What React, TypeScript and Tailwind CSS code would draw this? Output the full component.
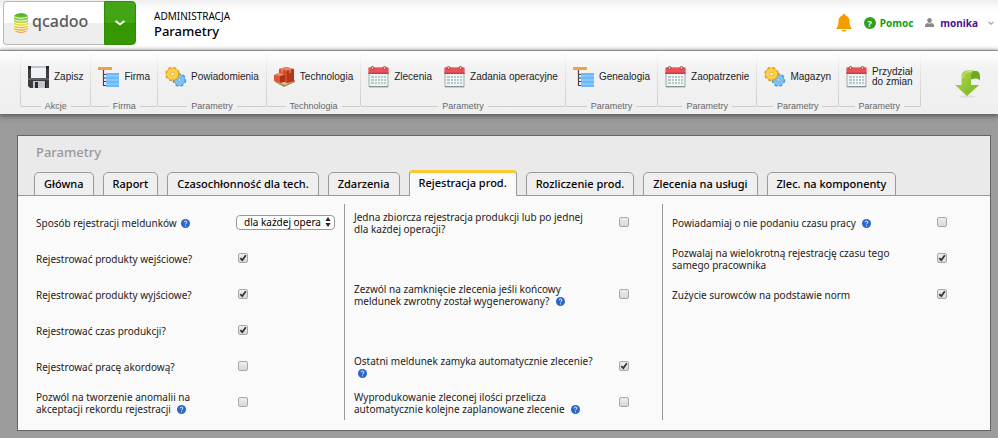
import { useId, type ReactNode } from "react";

function FloppyIcon() {
  return (
    <svg width="22" height="22" viewBox="0 0 22 22" className="shrink-0" aria-hidden="true">
      <path d="M0 0h21v22H2l-2-2z" fill="#3b3d41" />
      <path d="M0 0h21v3H0z" fill="#222428" />
      <path d="M3 0h15v12H3z" fill="#eef2f5" />
      <path d="M3 0h15v2H3z" fill="#bcc5cb" />
      <path d="M5 15h12v7H5z" fill="#c3c7ca" />
      <path d="M7 16h3v6H7z" fill="#2a2c30" />
      <path d="M17 15h1v7h-1z" fill="#16181b" />
      <path d="M0 12h21v2H0z" fill="#5b5e63" />
    </svg>
  );
}

function TreeIcon() {
  return (
    <svg width="22" height="22" viewBox="0 0 22 22" className="shrink-0" aria-hidden="true">
      <path d="M0 1h14v3H0z" fill="#f2a040" />
      <path d="M5.500 4v15.500H9M5.500 8.500H9M5.500 12H9M5.500 15.500H9" fill="none" stroke="#444" strokeWidth="1.200" />
      <path d="M8 7h13v14H8z" fill="#6cb8fc" />
      <path d="M8 10h13M8 14h13M8 18h13" stroke="#a4d4ff" />
    </svg>
  );
}

function Gear({ x, y, r, fill, stroke }: { x: number; y: number; r: number; fill: string; stroke: string }) {
  return (
    <g transform={`translate(${x} ${y})`}>
      <circle r={r + 0.6} fill="none" stroke={stroke} strokeWidth="2.400" strokeDasharray="2.800 2" />
      <circle r={r - 1.6} fill="none" stroke={stroke} strokeWidth="4.800" />
      <circle r={r - 1.6} fill="none" stroke={fill} strokeWidth="3.600" />
    </g>
  );
}

function GearsIcon() {
  return (
    <svg width="22" height="22" viewBox="0 0 22 22" className="shrink-0" aria-hidden="true">
      <Gear x={14.5} y={14} r={5} fill="#7cc4f5" stroke="#4c9bd6" />
      <Gear x={7.5} y={8} r={5.500} fill="#ffd044" stroke="#e0a024" />
    </svg>
  );
}

function BoxesIcon() {
  return (
    <svg width="22" height="22" viewBox="0 0 22 22" className="shrink-0" aria-hidden="true">
      <path d="M1 16l9 5 11-5v-2L10 18 1 14z" fill="#a98a55" />
      <path d="M3 16l8 3 9-4-9-2z" fill="#d8c293" />
      <path d="M5 3l7-2 8 2v12l-7 2-8-3z" fill="#d5492b" />
      <path d="M13 4.500l7-1.500v12l-7 2z" fill="#b43719" />
      <path d="M5 3l7-2 8 2-7 1.500z" fill="#ee8466" />
      <path d="M0 9l5-2 6 1.500v7L6 17l-6-2z" fill="#df5635" />
      <path d="M6 10l5-1.500v7L6 17z" fill="#ac3419" />
      <path d="M0 9l5-2 6 1.500L6 10z" fill="#f0896c" />
      <path d="M8 3v4M16 4v3" stroke="#f6ad93" />
    </svg>
  );
}

function CalendarIcon() {
  return (
    <svg width="22" height="22" viewBox="0 0 22 22" className="shrink-0" aria-hidden="true">
      <path d="M1 2h19v19H1z" fill="#eef4f3" stroke="#a3adab" />
      <path d="M.500 1.500h20V8H.500z" fill="#ee5057" />
      <path d="M.500 6.500h20V8H.500z" fill="#d03a42" />
      <path d="M3 10h15v8H3z" fill="#b5c9c8" />
      <path d="M3 12.500h15M3 15.500h15M6.500 10v8M9.500 10v8M12.500 10v8M15.500 10v8" stroke="#f3f8f7" />
      <path d="M1 20.500h19" stroke="#8b9593" />
      <circle cx="4.500" cy="2" r="1.500" fill="#efc4c4" stroke="#8c2c2c" strokeWidth=".8" />
      <circle cx="16.500" cy="2" r="1.500" fill="#efc4c4" stroke="#8c2c2c" strokeWidth=".8" />
    </svg>
  );
}

function LogoMark() {
  return (
    <svg width="16" height="22" viewBox="0 0 16 22" aria-hidden="true">
      <defs>
        <linearGradient id="mark" x1="0" y1="0" x2="0" y2="1">
          <stop offset="0" stopColor="#3fae22" />
          <stop offset=".35" stopColor="#8fd03a" />
          <stop offset=".6" stopColor="#e8df3c" />
          <stop offset="1" stopColor="#f58a1f" />
        </linearGradient>
      </defs>
      <path d="M1 5C1 0 15 0 15 5v12c0 5-14 5-14 0z" fill="url(#mark)" />
      <path
        d="M.500 4.600Q8 8 15.500 4.600M.500 7.400Q8 10.800 15.500 7.400M.500 10.200Q8 13.400 15.500 10.200M.500 13Q8 16 15.500 13M.500 15.600Q8 18.600 15.500 15.600M1 18Q8 21 15 18"
        fill="none"
        stroke="#fff"
        strokeWidth=".9"
      />
    </svg>
  );
}

type Tool = { label: ReactNode; icon: ReactNode };

const groups: { title: string; tools: Tool[] }[] = [
  { title: "Akcje", tools: [{ label: "Zapisz", icon: <FloppyIcon /> }] },
  { title: "Firma", tools: [{ label: "Firma", icon: <TreeIcon /> }] },
  { title: "Parametry", tools: [{ label: "Powiadomienia", icon: <GearsIcon /> }] },
  { title: "Technologia", tools: [{ label: "Technologia", icon: <BoxesIcon /> }] },
  {
    title: "Parametry",
    tools: [
      { label: "Zlecenia", icon: <CalendarIcon /> },
      { label: "Zadania operacyjne", icon: <CalendarIcon /> },
    ],
  },
  { title: "Parametry", tools: [{ label: "Genealogia", icon: <TreeIcon /> }] },
  { title: "Parametry", tools: [{ label: "Zaopatrzenie", icon: <CalendarIcon /> }] },
  { title: "Parametry", tools: [{ label: "Magazyn", icon: <GearsIcon /> }] },
  {
    title: "Parametry",
    tools: [{ label: <>Przydział<br />do zmian</>, icon: <CalendarIcon /> }],
  },
];

const tabs = [
  "Główna",
  "Raport",
  "Czasochłonność dla tech.",
  "Zdarzenia",
  "Rejestracja prod.",
  "Rozliczenie prod.",
  "Zlecenia na usługi",
  "Zlec. na komponenty",
];

function HelpDot() {
  return (
    <button
      type="button"
      aria-label="Pomoc"
      className="ml-1 inline-block size-[9px] rounded-full bg-[#2a66c8] align-[-1px]"
    >
      <svg viewBox="0 0 9 9" className="block size-full" aria-hidden="true">
        <path d="M3.200 3.300c0-1.800 2.700-1.700 2.700-.1 0 1-1.300 1-1.300 2.100M4.600 6.400v1" fill="none" stroke="#fff" />
      </svg>
    </button>
  );
}

function ToolGroup({ title, tools }: { title: string; tools: Tool[] }) {
  return (
    <div className="flex shrink-0">
      <div className="mb-2 w-px bg-linear-to-b from-transparent via-[#dedede] to-[#ccc]" />
      <div className="flex flex-col">
        <div className="flex h-[46px] px-px">
          {tools.map((tool, i) => (
            <button key={i} type="button" className="flex items-center gap-1 px-1.5 text-left text-[10px] leading-[10px] text-[#222]">
              {tool.icon}
              <span>{tool.label}</span>
            </button>
          ))}
        </div>
        <div className="flex h-3 items-center gap-1 text-[9px] leading-3 text-[#666]">
          <div className="h-px flex-1 bg-[#ccc]" />
          {title}
          <div className="h-px flex-1 bg-[#ccc]" />
        </div>
      </div>
    </div>
  );
}

function CheckRow({
  children,
  help = false,
  checked = false,
  first = false,
}: {
  children: ReactNode;
  help?: boolean;
  checked?: boolean;
  first?: boolean;
}) {
  const id = useId();
  return (
    <div className="flex h-9 items-center">
      <div className={first ? "mr-0.5 w-[200px] pt-0.5" : "mr-[21px] w-[244px] pt-0.5"}>
        <label htmlFor={id}>{children}</label>
        {help && <> <HelpDot /></>}
      </div>
      <span className="grid size-2.5">
        <input
          id={id}
          type="checkbox"
          defaultChecked={checked}
          className="peer col-start-1 row-start-1 size-2.5 appearance-none rounded-[2px] border border-[#a8a8a8] bg-linear-to-b from-[#eee] to-[#d8d8d8]"
        />
        <svg viewBox="0 0 10 10" className="pointer-events-none col-start-1 row-start-1 hidden size-2.5 peer-checked:block" aria-hidden="true">
          <path d="M2.300 5.200l2 2L7.800 2.300" fill="none" stroke="#333" strokeWidth="1.800" />
        </svg>
      </span>
    </div>
  );
}

export default function App() {
  return (
    <div className="min-h-screen bg-[#9b9b9b] font-['Noto_Sans','Lucida_Grande',sans-serif] text-[11px] text-black">
      <header className="flex h-[51px] items-start border-b border-[#b4b4b4] bg-linear-to-b from-[#eee] to-white to-20% pt-px pl-[3px]">
        <div className="flex h-11 w-[133px] shrink-0">
          <a href="#" className="flex flex-1 items-center rounded-l border border-r-0 border-[#b8b8b8] bg-linear-to-b from-white from-50% to-[#eee] to-50% pl-[9px]">
            <LogoMark />
            <span className="ml-[3px] pb-1 text-[16px] leading-6 font-medium text-[#5a5a5a]">qcadoo</span>
          </a>
          <button type="button" aria-label="Menu" className="flex w-8 items-center justify-center rounded-r border border-[#2f8c05] bg-linear-to-b from-[#42a516] from-50% to-[#359803] to-50%">
            <svg width="12" height="6" viewBox="0 0 12 6" aria-hidden="true">
              <path d="M1.500 1L6 4.300 10.500 1" fill="none" stroke="#fff" strokeWidth="1.800" />
            </svg>
          </button>
        </div>
        <div className="ml-[18px] flex-1 pt-2">
          <div className="text-[10px] leading-[14px]">ADMINISTRACJA</div>
          <h1 className="text-[13px] leading-4 font-medium">Parametry</h1>
        </div>
        <div className="flex items-center pt-3 text-[10px] leading-5 font-bold">
          <svg width="16" height="20" viewBox="0 0 16 20" aria-hidden="true">
            <path d="M8 1c1 0 1.500.7 1.500 1.500 2.500.7 4 2.500 4 5.500 0 4 .8 5.500 2 7v1H.500v-1c1.200-1.500 2-3 2-7 0-3 1.500-4.800 4-5.500C6.500 1.700 7 1 8 1zM5.700 17h4.600c-.4 2-4.200 2-4.600 0z" fill="#f49c00" />
          </svg>
          <a href="#" className="ml-3 flex items-center gap-1 text-[#12a012]">
            <span className="flex size-3 items-center justify-center rounded-full bg-[#2fa01c] text-[9px] leading-none text-white">?</span>
            Pomoc
          </a>
          <button type="button" className="mr-1 ml-3 flex items-center text-[#4b1190]">
            <svg width="9" height="10" viewBox="0 0 9 10" className="mr-1.5" aria-hidden="true">
              <path d="M4.500 0C6 0 6.800 1 6.800 2.300S6 5 4.500 5 2.200 3.600 2.200 2.300 3 0 4.500 0zM0 9V7.500C0 6 1.500 5.300 2.500 5c1 .8 3 .8 4 0C7.500 5.300 9 6 9 7.500V9z" fill="#8a8a8a" />
            </svg>
            monika
            <svg width="6" height="4" viewBox="0 0 6 4" className="ml-2.5" aria-hidden="true">
              <path d="M.500 1L3 3 5.500 1" fill="none" stroke="#aaa" strokeWidth="1.400" />
            </svg>
          </button>
        </div>
      </header>

      <div className="relative flex h-[63px] bg-linear-to-b from-white via-[#f2f2f2] via-30% to-[#efefef] pt-[3px] pl-5 font-['Liberation_Sans',Arial,sans-serif] shadow-[0_1px_5px_1px_#555]">
        {groups.map((group, i) => (
          <ToolGroup key={i} {...group} />
        ))}
        <div className="mb-2 w-px bg-linear-to-b from-transparent to-[#ccc]" />
        <button type="button" aria-label="Zwiń" className="mr-[17px] ml-auto flex items-center">
          <svg width="26" height="28" viewBox="0 0 26 28" aria-hidden="true">
            <defs>
              <linearGradient id="arrow" x1="0" y1="0" x2="1" y2="1">
                <stop offset="0" stopColor="#b0da50" />
                <stop offset="1" stopColor="#78b41c" />
              </linearGradient>
            </defs>
            <ellipse cx="12" cy="26.500" rx="8" ry="1.200" fill="#ddd" />
            <path d="M15 1h5c3.500 0 5 2 5 5v4.500c-1-1.500-3-2-5-2l-4 1z" fill="#6fa91f" />
            <path d="M0 15h6.500V7c0-4 2-6.500 6-6.500H20c-3 1-4 3-4 6V15h8L12 26z" fill="url(#arrow)" />
            <path d="M8 8c0-3.500 2-5.800 5-6.300h4" fill="none" stroke="#cfea86" />
          </svg>
        </button>
      </div>

      <main className="mt-[21px] mr-[7px] ml-[17px] border border-[#666]">
        <div className="flex h-[60px] flex-col border-b border-[#999] bg-[#eaeaea]">
          <h2 className="pt-2 pl-[18px] text-[13px] leading-4 font-medium text-[#999]">Parametry</h2>
          <div role="tablist" className="-mb-px ml-4 mt-auto flex items-end gap-[9px]">
            {tabs.map((tab) =>
              tab === "Rejestracja prod." ? (
                <button key={tab} type="button" role="tab" aria-selected="true" className="h-[26px] rounded-t border border-t-3 border-b-0 border-[#999] border-t-[#f9c933] bg-[#fafafa] px-[9px] pb-1 text-[11px] leading-4 font-medium whitespace-nowrap">
                  {tab}
                </button>
              ) : (
                <button key={tab} type="button" role="tab" aria-selected="false" className="h-6 rounded-t-[5px] border border-[#999] bg-[#efefef] px-[9px] text-[11px] leading-4 font-medium whitespace-nowrap">
                  {tab}
                </button>
              ),
            )}
          </div>
        </div>
        <div className="grid grid-cols-3 bg-[#fafafa] pt-2 pr-2.5 pb-2.5 pl-2 text-[10px] leading-3 text-[#222]">
          <div className="pl-2.5">
            <div className="flex h-9 items-center">
              <div className="w-[200px] pt-0.5">
                <label htmlFor="mode">Sposób rejestracji meldunków</label>
                <HelpDot />
              </div>
              <span className="grid w-[99px] items-center">
                <select id="mode" className="col-start-1 row-start-1 h-[15px] w-full appearance-none overflow-hidden rounded border border-[#999] bg-white pr-3 pl-[7px] text-[10px] leading-[13px] text-black">
                  <option>dla każdej opera</option>
                </select>
                <svg width="6" height="10" viewBox="0 0 6 10" className="pointer-events-none col-start-1 row-start-1 mr-1 justify-self-end" aria-hidden="true">
                  <path d="M3 0l2.600 4H.4zM3 10L.4 6h5.200z" fill="#222" />
                </svg>
              </span>
            </div>
            <CheckRow first checked>Rejestrować produkty wejściowe?</CheckRow>
            <CheckRow first checked>Rejestrować produkty wyjściowe?</CheckRow>
            <CheckRow first checked>Rejestrować czas produkcji?</CheckRow>
            <CheckRow first>Rejestrować pracę akordową?</CheckRow>
            <CheckRow first help>Pozwól na tworzenie anomalii na akceptacji rekordu rejestracji</CheckRow>
          </div>
          <div className="border-l border-[#999] pl-[9px]">
            <CheckRow>Jedna zbiorcza rejestracja produkcji lub po jednej dla każdej operacji?</CheckRow>
            <div className="h-9" />
            <CheckRow help>Zezwól na zamknięcie zlecenia jeśli końcowy meldunek zwrotny został wygenerowany?</CheckRow>
            <div className="h-9" />
            <CheckRow help checked>Ostatni meldunek zamyka automatycznie zlecenie?</CheckRow>
            <CheckRow help>Wyprodukowanie zleconej ilości przelicza automatycznie kolejne zaplanowane zlecenie</CheckRow>
          </div>
          <div className="border-l border-[#999] pl-[9px]">
            <CheckRow help>Powiadamiaj o nie podaniu czasu pracy</CheckRow>
            <CheckRow checked>Pozwalaj na wielokrotną rejestrację czasu tego samego pracownika</CheckRow>
            <CheckRow checked>Zużycie surowców na podstawie norm</CheckRow>
          </div>
        </div>
      </main>
    </div>
  );
}
